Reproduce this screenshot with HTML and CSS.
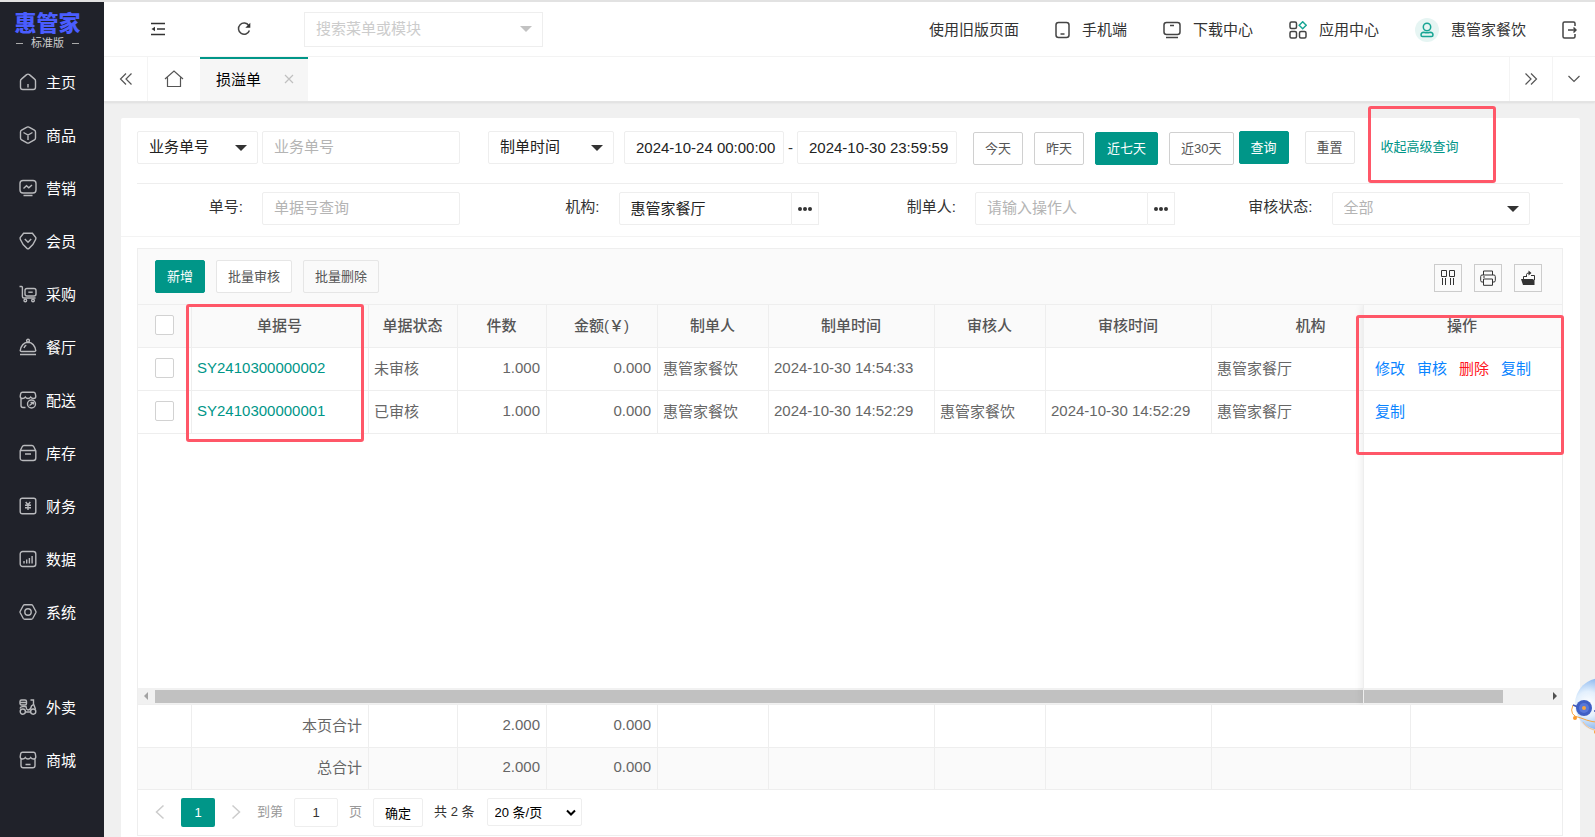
FILE: index.html
```html
<!DOCTYPE html>
<html lang="zh-CN">
<head>
    <meta charset="UTF-8"/>
    <meta content="width=device-width, initial-scale=1" name="viewport"/>
    <title>损溢单</title>
    <link rel="stylesheet" href="styles.css">
</head>
<body>

<div class="app">
    <aside class="sidebar">
        <div class="logo">
            <div class="logo-name">惠管家</div>
            <div class="logo-edition">标准版</div>
        </div>
        <nav class="menu">
            <a href="#">
                <svg class="icon" viewBox="0 0 18 18"><path d="M1.5 8 Q1.5 6.8 2.4 6.1 L7.6 1.6 Q9 .6 10.4 1.6 L15.6 6.1 Q16.5 6.8 16.5 8 V14.2 Q16.5 16.5 14.2 16.5 H3.8 Q1.5 16.5 1.5 14.2 Z M9 11 V14.5"/></svg>
                主页
            </a>
            <a href="#">
                <svg class="icon" viewBox="0 0 18 18"><path d="M8 1.2 Q9 .6 10 1.2 L15.4 4.2 Q16.5 4.8 16.5 6 V12 Q16.5 13.2 15.4 13.8 L10 16.8 Q9 17.4 8 16.8 L2.6 13.8 Q1.5 13.2 1.5 12 V6 Q1.5 4.8 2.6 4.2 Z M4.5 6.5 L9 9 L13.5 6.5 M9 9 V14"/></svg>
                商品
            </a>
            <a href="#">
                <svg class="icon" viewBox="0 0 18 18"><rect x="1" y="1.5" width="16" height="12.5" rx="3"/><path d="M4.5 9.5 L7.5 6.8 L9.8 8.8 L13 6 M4.5 16.5 H13.5"/></svg>
                营销
            </a>
            <a href="#">
                <svg class="icon" viewBox="0 0 18 18"><path d="M4.6 1.2 H13.4 L16.8 5.6 Q17 6.4 16.6 7.4 Q14.5 13 9.8 16.6 Q9 17.2 8.2 16.6 Q3.5 13 1.4 7.4 Q1 6.4 1.2 5.6 Z M5.8 7 L9 10.3 L12.2 7"/></svg>
                会员
            </a>
            <a href="#">
                <svg class="icon" viewBox="0 0 18 18"><path d="M.5 1.5 H2.6 Q3.4 1.5 3.4 2.4 V11.5 Q3.4 13 5 13 H16.5"/><rect x="6" y="3.5" width="11" height="7.5" rx="2"/><path d="M9.3 7.2 H13.7"/><circle cx="6.3" cy="15.4" r="1.3"/><circle cx="14" cy="15.4" r="1.3"/></svg>
                采购
            </a>
            <a href="#">
                <svg class="icon" viewBox="0 0 18 18"><path d="M1.2 12.8 Q2.5 4.5 9 4.2 Q15.5 4.5 16.8 12.8 Q16.5 13.5 15.5 13.5 H2.5 Q1.5 13.5 1.2 12.8 Z M1 16.5 H17 M5 10 Q5.6 8 7.3 7.2"/><circle cx="9" cy="2.7" r="1.4"/></svg>
                餐厅
            </a>
            <a href="#">
                <svg class="icon" viewBox="0 0 18 18"><path d="M3.5 1.2 H14.5 Q16 1.2 16.3 2.7 L16.8 5.3 Q16.8 7.5 14.5 7.5 Q12.6 7.5 11.7 6 Q10.8 7.5 9 7.5 Q7.2 7.5 6.3 6 Q5.4 7.5 3.5 7.5 Q1.2 7.5 1.2 5.3 L1.7 2.7 Q2 1.2 3.5 1.2 Z M2 7.5 V14.5 Q2 16.5 4 16.5 H6.5"/><circle cx="12.5" cy="13" r="4"/><path d="M10.5 14.5 L14.5 11.5 M11.5 11.5 H14.5 V13.5"/></svg>
                配送
            </a>
            <a href="#">
                <svg class="icon" viewBox="0 0 18 18"><path d="M1.2 6.8 L3.2 2.7 Q3.8 1.5 5 1.5 H13 Q14.2 1.5 14.8 2.7 L16.8 6.8 V14 Q16.8 16.5 14.3 16.5 H3.7 Q1.2 16.5 1.2 14 Z M1.2 6.5 H16.8 M6 10 H12"/></svg>
                库存
            </a>
            <a href="#">
                <svg class="icon" viewBox="0 0 18 18"><rect x="1.2" y="1.2" width="15.6" height="15.6" rx="2"/><path d="M6.7 5 L9 7.8 L11.3 5 M6 8.3 H12 M6 10.7 H12 M9 8 V13"/></svg>
                财务
            </a>
            <a href="#">
                <svg class="icon" viewBox="0 0 18 18"><rect x="1.2" y="1.5" width="15.6" height="15" rx="2.5"/><path d="M5 11 V13.5 M7.7 9.5 V13.5 M10.4 8 V13.5 M13.1 6 V13.5"/></svg>
                数据
            </a>
            <a href="#">
                <svg class="icon" viewBox="0 0 18 18"><path d="M5.7 1.7 H12.3 Q13.2 1.7 13.7 2.5 L16.8 8.2 Q17.2 9 16.8 9.8 L13.7 15.5 Q13.2 16.3 12.3 16.3 H5.7 Q4.8 16.3 4.3 15.5 L1.2 9.8 Q.8 9 1.2 8.2 L4.3 2.5 Q4.8 1.7 5.7 1.7 Z"/><circle cx="9" cy="9" r="3.2"/></svg>
                系统
            </a>
            <a class="menu-break" href="#">
                <svg class="icon" viewBox="0 0 18 18"><rect x="1" y="2" width="6.5" height="5" rx="1.5"/><path d="M1 4.5 H7.5 M11.5 2 H14.5 V6 L16.5 11 M1 10.5 Q1.5 8.5 4 8.5 H7 Q7.5 12 9 12 Q11.5 12 12.5 8 L14.5 6.5 M6.5 14 H11.5"/><circle cx="3.8" cy="13.6" r="2.6"/><circle cx="14.2" cy="13.6" r="2.6"/></svg>
                外卖
            </a>
            <a href="#">
                <svg class="icon" viewBox="0 0 18 18"><path d="M3.5 1.2 H14.5 Q16 1.2 16.3 2.7 L16.8 5.8 Q16.8 8 14.5 8 Q12.6 8 11.7 6.5 Q10.8 8 9 8 Q7.2 8 6.3 6.5 Q5.4 8 3.5 8 Q1.2 8 1.2 5.8 L1.7 2.7 Q2 1.2 3.5 1.2 Z M2 8 V14.5 Q2 16.8 4.3 16.8 H13.7 Q16 16.8 16 14.5 V8 M6.5 13.5 H11.5"/></svg>
                商城
            </a>
        </nav>
    </aside>

    <div class="main">
        <header class="topbar">
            <button class="icon-btn" type="button" aria-label="收起菜单">
                <svg width="16" height="14" viewBox="0 0 16 14"><path d="M1 1.5 H15 M7 7 H15 M1 12.5 H15" stroke="#333" stroke-width="1.5" fill="none"/><path class="solid" d="M5 4.7 V9.3 L1.5 7 Z"/></svg>
            </button>
            <button class="icon-btn" type="button" aria-label="刷新">
                <svg width="16" height="16" viewBox="0 0 16 16"><path d="M12.8 4.6 A5.6 5.6 0 1 0 13.4 9.5"/><path class="solid" d="M14.3 1.8 V6.8 H9.3 Z"/></svg>
            </button>
            <div class="select-box top-search">
                <input type="text" aria-label="搜索菜单或模块" placeholder="搜索菜单或模块"/>
            </div>
            <div class="top-links">
                <a href="#">使用旧版页面</a>
                <a href="#">
                    <svg width="15" height="18" viewBox="0 0 15 18"><rect x="1" y="1.5" width="13" height="15" rx="2.5"/><path d="M5.5 13 H9.5"/></svg>
                    手机端
                </a>
                <a href="#">
                    <svg width="18" height="18" viewBox="0 0 18 18"><rect x="1" y="1.5" width="16" height="12" rx="2.5"/><path d="M7 4.500 H11 M3 16.5 H15"/></svg>
                    下载中心
                </a>
                <a href="#">
                    <svg width="18" height="18" viewBox="0 0 18 18"><rect x="1" y="1" width="6.5" height="6.5" rx="1.5"/><rect x="1" y="10.5" width="6.5" height="6.5" rx="1.5"/><rect x="10.5" y="10.5" width="6.5" height="6.5" rx="1.5"/><path class="teal" d="M13.7 .8 L17.2 4.3 L13.7 7.8 L10.2 4.3 Z"/></svg>
                    应用中心
                </a>
                <a href="#">
                    <span class="avatar">
                        <svg width="14" height="16" viewBox="0 0 14 16"><circle class="teal" cx="7" cy="5" r="3.7"/><path class="teal" d="M1 13 Q1 10.2 3.8 10.2 Q7 11.5 10.2 10.2 Q13 10.2 13 13 Q13 14.5 11.5 14.5 H2.5 Q1 14.5 1 13 Z"/></svg>
                    </span>
                    惠管家餐饮
                </a>
                <a href="#" aria-label="退出">
                    <svg width="15" height="18" viewBox="0 0 15 18"><path d="M13 5 V2.5 Q13 1 11.5 1 H2.5 Q1 1 1 2.5 V15.5 Q1 17 2.5 17 H11.5 Q13 17 13 15.5 V13 M6 9 H14 M11.5 6.5 L14 9 L11.5 11.5"/></svg>
                </a>
            </div>
        </header>

        <div class="tabs">
            <button class="tab-ctrl" type="button" aria-label="向左">
                <svg width="14" height="14" viewBox="0 0 14 14"><path d="M7 1.5 L1.5 7 L7 12.5 M12.5 1.5 L7 7 L12.5 12.5"/></svg>
            </button>
            <a class="tab-home" href="#" aria-label="主页">
                <svg width="20" height="18" viewBox="0 0 20 18"><path d="M1 9 L10 1 L19 9 M3.5 7.5 V16.5 H16.5 V7.5"/></svg>
            </a>
            <div class="tab-active">
                <a href="#">损溢单</a>
                <button type="button" aria-label="关闭">
                    <svg width="10" height="10" viewBox="0 0 10 10"><path d="M1 1 L9 9 M9 1 L1 9"/></svg>
                </button>
            </div>
            <button class="tab-ctrl tab-right" type="button" aria-label="向右">
                <svg width="14" height="14" viewBox="0 0 14 14"><path d="M1.5 1.5 L7 7 L1.5 12.5 M7 1.5 L12.5 7 L7 12.5"/></svg>
            </button>
            <button class="tab-ctrl tab-more" type="button" aria-label="更多">
                <svg width="14" height="14" viewBox="0 0 14 14"><path d="M1.5 4 L7 9.5 L12.5 4"/></svg>
            </button>
        </div>

        <div class="content">
            <div class="card">
                <form class="filters">
                    <div class="filter-row">
                        <div class="select-box no-type">
                            <select aria-label="单号类型"><option>业务单号</option></select>
                        </div>
                        <input class="no-input" type="text" aria-label="业务单号" placeholder="业务单号"/>
                        <div class="select-box time-type">
                            <select aria-label="时间类型"><option>制单时间</option></select>
                        </div>
                        <input class="date-input" type="text" aria-label="开始时间" value="2024-10-24 00:00:00"/>
                        <span class="dash">-</span>
                        <input class="date-input" type="text" aria-label="结束时间" value="2024-10-30 23:59:59"/>
                        <div class="quick">
                            <button class="btn btn-line" type="button">今天</button>
                            <button class="btn btn-line" type="button">昨天</button>
                            <button class="btn btn-primary" type="button">近七天</button>
                            <button class="btn btn-line" type="button">近30天</button>
                        </div>
                        <button class="btn btn-primary btn-query" type="submit">查询</button>
                        <button class="btn btn-reset" type="reset">重置</button>
                        <div class="toggle">
                            <a href="#">收起高级查询</a>
                            <div class="mark mark-toggle"></div>
                        </div>
                    </div>
                    <div class="filter-grid">
                        <div class="field">
                            <label for="billNo">单号:</label>
                            <input id="billNo" type="text" placeholder="单据号查询"/>
                        </div>
                        <div class="field">
                            <label for="org">机构:</label>
                            <div class="picker">
                                <input id="org" type="text" value="惠管家餐厅"/>
                                <button type="button" aria-label="选择机构"><i></i><i></i><i></i></button>
                            </div>
                        </div>
                        <div class="field">
                            <label for="maker">制单人:</label>
                            <div class="picker">
                                <input id="maker" type="text" placeholder="请输入操作人"/>
                                <button type="button" aria-label="选择制单人"><i></i><i></i><i></i></button>
                            </div>
                        </div>
                        <div class="field">
                            <label for="status">审核状态:</label>
                            <div class="select-box status">
                                <select id="status"><option>全部</option></select>
                            </div>
                        </div>
                    </div>
                </form>

                <div class="grid">
                    <div class="toolbar">
                        <button class="btn btn-primary" type="button">新增</button>
                        <button class="btn btn-reset" type="button">批量审核</button>
                        <button class="btn btn-plain" type="button">批量删除</button>
                        <div class="tools">
                            <button type="button" aria-label="筛选列">
                                <svg width="16" height="16" viewBox="0 0 16 16"><path d="M1.5 .5 H6.5 V6.5 H1.5 Z M9.5 .5 H14.5 V6.5 H9.5 Z M2.5 8 V15 M5.5 8 V15 M10.5 8 V15 M13.5 8 V15"/></svg>
                            </button>
                            <button type="button" aria-label="打印">
                                <svg width="16" height="16" viewBox="0 0 16 16"><path d="M3.5 5 V1 H12.5 V5 M3.5 12 H2 Q.7 12 .7 10.5 V6.5 Q.7 5 2 5 H14 Q15.3 5 15.3 6.5 V10.5 Q15.3 12 14 12 H12.5 M3.5 9 H12.5 V15.3 H3.5 Z M3 7 H5"/></svg>
                            </button>
                            <button type="button" aria-label="导出">
                                <svg width="16" height="16" viewBox="0 0 16 16"><path d="M3.5 9 V6.5 H6 M11 5.5 H14.5 V10 M6.5 7 V4.5 Q6.5 3 9 3"/><path class="solid" d="M8.5 .5 L11.5 3 L8.5 5.5 Z M1 9 H12.5 L14.5 10 V15 H3 Z"/></svg>
                            </button>
                        </div>
                    </div>

                    <div class="table-area">
                        <table class="bills">
                            <colgroup>
                                <col class="c-check"><col class="c-no"><col class="c-small"><col class="c-small"><col class="c-mid"><col class="c-mid"><col class="c-time"><col class="c-mid"><col class="c-time"><col class="c-org"><col>
                            </colgroup>
                            <thead>
                                <tr>
                                    <th><input type="checkbox" aria-label="全选"/></th>
                                    <th>单据号</th>
                                    <th>单据状态</th>
                                    <th>件数</th>
                                    <th>金额(￥)</th>
                                    <th>制单人</th>
                                    <th>制单时间</th>
                                    <th>审核人</th>
                                    <th>审核时间</th>
                                    <th>机构</th>
                                    <th class="fixed">操作</th>
                                </tr>
                            </thead>
                            <tbody>
                                <tr>
                                    <td class="check"><input type="checkbox" aria-label="选择 SY2410300000002"/></td>
                                    <td><a class="bill-link" href="#">SY2410300000002</a></td>
                                    <td>未审核</td>
                                    <td class="num">1.000</td>
                                    <td class="num">0.000</td>
                                    <td>惠管家餐饮</td>
                                    <td>2024-10-30 14:54:33</td>
                                    <td></td>
                                    <td></td>
                                    <td>惠管家餐厅</td>
                                    <td class="fixed ops"><a href="#">修改</a><a href="#">审核</a><a class="danger" href="#">删除</a><a href="#">复制</a></td>
                                </tr>
                                <tr>
                                    <td class="check"><input type="checkbox" aria-label="选择 SY2410300000001"/></td>
                                    <td><a class="bill-link" href="#">SY2410300000001</a></td>
                                    <td>已审核</td>
                                    <td class="num">1.000</td>
                                    <td class="num">0.000</td>
                                    <td>惠管家餐饮</td>
                                    <td>2024-10-30 14:52:29</td>
                                    <td>惠管家餐饮</td>
                                    <td>2024-10-30 14:52:29</td>
                                    <td>惠管家餐厅</td>
                                    <td class="fixed ops"><a href="#">复制</a></td>
                                </tr>
                            </tbody>
                        </table>
                        <div class="scrollbar">
                            <span class="arrow-left"></span>
                            <div class="track"><div class="thumb"></div></div>
                            <span class="arrow-right"></span>
                        </div>
                        <div class="fixed-edge"></div>
                    </div>

                    <div class="total-area">
                        <table class="bills totals">
                            <colgroup>
                                <col class="c-check"><col class="c-no"><col class="c-small"><col class="c-small"><col class="c-mid"><col class="c-mid"><col class="c-time"><col class="c-mid"><col class="c-time"><col class="c-org"><col>
                            </colgroup>
                            <tbody>
                                <tr>
                                    <td></td><td class="num">本页合计</td><td></td><td class="num">2.000</td><td class="num">0.000</td><td></td><td></td><td></td><td></td><td></td><td></td>
                                </tr>
                                <tr>
                                    <td></td><td class="num">总合计</td><td></td><td class="num">2.000</td><td class="num">0.000</td><td></td><td></td><td></td><td></td><td></td><td></td>
                                </tr>
                            </tbody>
                        </table>
                    </div>

                    <div class="pager">
                        <button class="page-arrow" type="button" aria-label="上一页">
                            <svg width="10" height="16" viewBox="0 0 10 16"><path d="M8.5 1.5 L1.5 8 L8.5 14.5"/></svg>
                        </button>
                        <button class="page-current" type="button">1</button>
                        <button class="page-arrow" type="button" aria-label="下一页">
                            <svg width="10" height="16" viewBox="0 0 10 16"><path d="M1.5 1.5 L8.5 8 L1.5 14.5"/></svg>
                        </button>
                        <label class="muted" for="pageNo">到第</label>
                        <input id="pageNo" type="text" value="1"/>
                        <span class="muted">页</span>
                        <button class="page-go" type="button">确定</button>
                        <span>共 2 条</span>
                        <div class="page-size">
                            <select aria-label="每页条数"><option>20 条/页</option></select>
                            <svg width="10" height="8" viewBox="0 0 10 8"><path d="M1 1.5 L5 5.5 L9 1.5"/></svg>
                        </div>
                    </div>

                    <div class="mark mark-no"></div>
                    <div class="mark mark-ops"></div>
                </div>
            </div>
        </div>
    </div>
</div>

<!-- assistant robot, half hidden at the window edge -->
<div class="robot">
    <svg width="34" height="66" viewBox="0 0 34 66">
        <defs>
            <radialGradient id="robotHead" cx="0.25" cy="0.5" r="0.6">
                <stop offset="0" stop-color="#ffffff"/>
                <stop offset="0.4" stop-color="#e3f0fd"/>
                <stop offset="1" stop-color="#6fa5ea"/>
            </radialGradient>
        </defs>
        <path d="M12 46 Q16 58 34 60 V48 Z" fill="#dfe3ef"/>
        <circle cx="34" cy="32" r="26" fill="url(#robotHead)"/>
        <path d="M6 33 Q1 44 14 46 Q26 51 34 50" stroke="#f7a440" stroke-width="1"/>
        <path d="M16 50 Q20 58 34 59" stroke="#f9c58c" stroke-width="1"/>
        <path d="M6 33 L11 35 M27 39 H34" stroke="#3f55b5" stroke-width="1.5"/>
        <circle cx="17" cy="36" r="8" fill="#3f5fc4"/>
        <circle cx="17" cy="36" r="5" fill="#5877d8"/>
        <circle cx="17" cy="36" r="2" fill="#f7a440"/>
        <circle cx="8" cy="46" r="2" fill="#fb9a2d"/>
        <circle cx="29" cy="60" r="2" fill="#fb9a2d"/>
    </svg>
</div>

</body>
</html>
```
FILE: styles.css
```css
* {
  box-sizing: border-box;
}
body {
  margin: 0;
  font-family: "Liberation Sans", "Noto Sans CJK SC", sans-serif;
  font-size: 15px;
  color: #333;
  background: #f0f0f0;
}
a {
  color: inherit;
  text-decoration: none;
}
button, input, select {
  font: inherit;
  color: inherit;
  margin: 0;
}
button {
  padding: 0;
  border: none;
  background: none;
  cursor: pointer;
}
svg {
  display: block;
  flex: none;
  fill: none;
  stroke: #444;
  stroke-width: 1.5;
}
svg .solid {
  fill: #333;
  stroke: none;
}
svg .teal {
  stroke: #17a594;
}
.app {
  display: flex;
  height: 100vh;
  min-height: 780px;
  border-top: 2px solid #e2e2e2;
  overflow: hidden;
}

/* sidebar */
.sidebar {
  width: 104px;
  flex: none;
  background: #20222a;
  color: #fff;
}
.logo {
  height: 54px;
  padding-top: 10px;
  text-align: center;
  width: 95px;
}
.logo-name {
  font-size: 22px;
  line-height: 24px;
  font-weight: 900;
  color: #4a5dff;
}
.logo-edition {
  display: flex;
  align-items: center;
  justify-content: center;
  gap: 8px;
  font-size: 11px;
  line-height: 14px;
  color: #ccc;
}
.logo-edition::before,
.logo-edition::after {
  content: "";
  width: 7px;
  height: 1px;
  background: #aaa;
}
.menu a {
  display: flex;
  align-items: center;
  gap: 9px;
  height: 53px;
  padding: 0 0 2px 19px;
}
.menu .menu-break {
  margin-top: 42px;
}
.icon {
  width: 18px;
  height: 18px;
  stroke: #b9babd;
  stroke-width: 1.4;
}

/* header */
.main {
  flex: 1;
  min-width: 0;
  display: flex;
  flex-direction: column;
}
.topbar {
  display: flex;
  align-items: center;
  height: 55px;
  flex: none;
  padding: 0 18px 0 46px;
  background: #fff;
  border-bottom: 1px solid #f4f4f4;
}
.icon-btn {
  width: 16px;
  margin-right: 70px;
}
.icon-btn + .icon-btn {
  margin-right: 52px;
}
.select-box {
  position: relative;
}
.select-box::after {
  content: "";
  position: absolute;
  right: 11px;
  top: 50%;
  margin-top: -3px;
  border: 6px solid transparent;
  border-top-color: #333;
  border-bottom: none;
  pointer-events: none;
}
.select-box select,
.select-box input {
  width: 100%;
  appearance: none;
}
.top-search {
  width: 239px;
}
.top-search::after {
  border-top-color: #c2c2c2;
}
.top-search input {
  height: 35px;
  padding: 0 11px 2px;
  border: 1px solid #eee;
}
.top-search input::placeholder {
  color: #ccc;
}
.top-links {
  margin-left: auto;
  display: flex;
  align-items: center;
  gap: 36px;
}
.top-links a {
  display: flex;
  align-items: center;
  gap: 12px;
  padding-bottom: 2px;
  white-space: nowrap;
}
.top-links a > svg,
.avatar {
  margin-top: 4px;
}
.avatar {
  width: 24px;
  height: 24px;
  border-radius: 50%;
  background: #e6f5f3;
  display: flex;
  align-items: center;
  justify-content: center;
}

/* page tabs */
.tabs {
  display: flex;
  height: 45px;
  flex: none;
  background: #fff;
  border-bottom: 1px solid #e4e4e4;
  box-shadow: 0 1px 2px rgba(0,0,0,0.08);
}
.tabs svg {
  stroke: #555;
  stroke-width: 1.2;
}
.tab-ctrl,
.tab-home {
  width: 44px;
  display: flex;
  align-items: center;
  justify-content: center;
  border-right: 1px solid #f4f4f4;
}
.tab-home {
  width: 52px;
  border-right: none;
}
.tab-active {
  display: flex;
  align-items: center;
  width: 108px;
  padding: 0 14px 4px 16px;
  justify-content: space-between;
  background: #f6f6f6;
  border-top: 2px solid #009688;
  color: #000;
}
.tab-active button {
  padding-top: 2px;
}
.tab-active svg {
  stroke: #c0c0c0;
}
.tab-right {
  margin-left: auto;
  border-left: 1px solid #f4f4f4;
}
.tab-more {
  width: 42px;
  border-right: none;
}

/* filters */
.content {
  flex: 1;
  min-height: 0;
  display: flex;
  padding: 16px 15px 0 17px;
}
.card {
  flex: 1;
  min-width: 0;
  display: flex;
  flex-direction: column;
  background: #fff;
  border-radius: 2px 2px 0 0;
}
.filters {
  padding: 13px 17px 0 16px;
  border-bottom: 1px solid #f3f3f3;
}
.filters input,
.filters select {
  height: 33px;
  padding: 0 11px 2px;
  border: 1px solid #eee;
  border-radius: 2px;
  background: #fff;
  color: #222;
}
.filters input::placeholder {
  color: #b4b4b4;
}
.filter-row {
  display: flex;
  align-items: flex-start;
  height: 53px;
  border-bottom: 1px solid #eee;
}
.no-type {
  width: 121px;
  margin-right: 4px;
}
.filters .no-input {
  width: 198px;
  margin-right: 28px;
}
.time-type {
  width: 126px;
  margin-right: 10px;
}
.filters .date-input {
  width: 160px;
  padding: 0 0 0 11px;
}
.dash {
  width: 13px;
  line-height: 33px;
  text-align: center;
}
.quick {
  display: flex;
  gap: 11px;
  margin: 1px 5px 0 16px;
}
.btn {
  height: 33px;
  padding: 0 11px 2px;
  border: 1px solid #e6e6e6;
  border-radius: 2px;
  font-size: 13px;
  color: #555;
  white-space: nowrap;
}
.btn-line {
  border-color: #d0d0d0;
}
.btn-reset {
  background: #fff;
}
.btn-primary {
  border-color: #009688;
  background: #009688;
  color: #fff;
}
.btn-query {
  margin-right: 16px;
}
.toggle {
  position: relative;
  margin-left: 26px;
  font-size: 13px;
  line-height: 32px;
  color: #009688;
  white-space: nowrap;
}
.filter-grid {
  display: grid;
  grid-template-columns: repeat(4, 1fr);
  padding: 8px 0 11px;
}
.field {
  display: flex;
}
.field label {
  width: 125px;
  padding-right: 19px;
  line-height: 30px;
  text-align: right;
  white-space: nowrap;
}
.field > input,
.status {
  width: 198px;
}
.filters .status select {
  color: #b4b4b4;
}
.picker {
  display: flex;
  width: 200px;
}
.picker input {
  flex: 1;
  min-width: 0;
  border-radius: 2px 0 0 2px;
}
.picker button {
  width: 27px;
  border: 1px solid #eee;
  border-left: none;
  display: flex;
  align-items: center;
  justify-content: center;
  gap: 1px;
}
.picker i {
  width: 4px;
  height: 4px;
  border-radius: 50%;
  background: #333;
}

/* bill grid */
.grid {
  position: relative;
  flex: 1;
  min-height: 0;
  display: flex;
  flex-direction: column;
  margin: 11px 17px 1px 16px;
  border: 1px solid #eee;
}
.toolbar {
  display: flex;
  align-items: center;
  gap: 11px;
  height: 56px;
  flex: none;
  padding: 0 20px 0 17px;
  background: #fafafa;
  border-bottom: 1px solid #eee;
}
.tools {
  margin-left: auto;
  padding-top: 2px;
  display: flex;
  gap: 12px;
}
.tools button {
  width: 28px;
  height: 28px;
  border: 1px solid #ccc;
  display: flex;
  align-items: center;
  justify-content: center;
}
.tools svg {
  stroke: #333;
  stroke-width: 1;
}
.table-area {
  position: relative;
  flex: 1;
  min-height: 0;
  overflow: hidden;
  display: flex;
  flex-direction: column;
}
.bills {
  width: 100%;
  min-width: 1472px;
  table-layout: fixed;
  border-collapse: separate;
  border-spacing: 0;
  color: #666;
}
.c-check {
  width: 54px;
}
.c-no {
  width: 177px;
}
.c-small {
  width: 89px;
}
.c-mid {
  width: 111px;
}
.c-time {
  width: 166px;
}
.c-org {
  width: 199px;
}
.bills th,
.bills td {
  height: 43px;
  padding: 0 6px 4px 5px;
  border-right: 1px solid #eee;
  border-bottom: 1px solid #eee;
  text-align: left;
  white-space: nowrap;
}
.bills th {
  background: #fafafa;
  color: #555;
  font-weight: 500;
  text-align: center;
}
.bills input {
  appearance: none;
  display: block;
  width: 19px;
  height: 20px;
  margin: 2px auto 0;
  border: 1px solid #d2d2d2;
  border-radius: 2px;
  background: #fff;
}
.bills .num {
  text-align: right;
}
.bills .fixed {
  position: sticky;
  right: 0;
  border-right: none;
  background: #fff;
}
.bills th.fixed {
  background: #fafafa;
}
.bill-link {
  color: #009688;
}
.bills .ops {
  padding-left: 12px;
}
.ops a {
  margin-right: 12px;
  color: #0a84ff;
}
.ops .danger {
  color: #ff1522;
}
.fixed-edge {
  position: absolute;
  top: 0;
  right: 0;
  bottom: 0;
  width: 199px;
  border-left: 1px solid #eee;
  box-shadow: -1px 0 8px rgba(0,0,0,0.08);
  pointer-events: none;
}
.scrollbar {
  display: flex;
  align-items: center;
  height: 17px;
  flex: none;
  margin-top: auto;
  background: #f1f1f1;
  border-bottom: 1px solid #eee;
}
.arrow-left,
.arrow-right {
  width: 4px;
  margin: 0 7px 0 6px;
  border: 4px solid transparent;
  border-left: none;
  border-right: 4px solid #a3a3a3;
}
.arrow-right {
  margin: 0 5px 0 8px;
  border-right: none;
  border-left: 4px solid #505050;
}
.track {
  flex: 1;
}
.thumb {
  width: 97%;
  height: 13px;
  background: #c1c1c1;
}
.total-area {
  overflow: hidden;
  flex: none;
}
.totals tr:last-child {
  background: #fafafa;
}
.totals tr:last-child td {
  height: 42px;
}

/* pager */
.pager {
  display: flex;
  align-items: center;
  height: 45px;
  flex: none;
  padding: 0 0 1px 17px;
  font-size: 13px;
}
.pager span,
.pager label {
  padding-bottom: 3px;
}
.page-arrow svg {
  stroke: #ccc;
}
.page-current {
  width: 34px;
  height: 29px;
  margin: 0 16px;
  border-radius: 2px;
  background: #009688;
  color: #fff;
}
.muted {
  color: #999;
}
.pager .muted {
  margin-right: 11px;
}
.pager label.muted {
  margin-left: 16px;
}
.pager input {
  width: 44px;
  height: 29px;
  margin-right: 11px;
  border: 1px solid #eee;
  border-radius: 2px;
  text-align: center;
}
.page-go {
  width: 50px;
  height: 29px;
  margin-right: 11px;
  border: 1px solid #eee;
  border-radius: 2px;
  color: #000;
}
.page-size {
  position: relative;
  margin-left: 12px;
}
.page-size select {
  width: 95px;
  height: 28px;
  padding: 0 7px;
  border: 1px solid #eee;
  border-radius: 2px;
  appearance: none;
  background: #fff;
  color: #000;
}
.page-size svg {
  position: absolute;
  right: 6px;
  top: 11px;
  stroke: #000;
  stroke-width: 2;
  pointer-events: none;
}

/* highlight frames */
.mark {
  position: absolute;
  border: 3px solid #ff5768;
  border-radius: 3px;
  pointer-events: none;
}
.mark-toggle {
  left: -13px;
  top: -25px;
  width: 128px;
  height: 77px;
}
.mark-no {
  left: 48px;
  top: 55px;
  width: 178px;
  height: 138px;
}
.mark-ops {
  right: -2px;
  top: 66px;
  width: 208px;
  height: 140px;
}
.robot {
  position: fixed;
  right: -6px;
  top: 672px;
}
.robot svg {
  stroke: none;
}
```
